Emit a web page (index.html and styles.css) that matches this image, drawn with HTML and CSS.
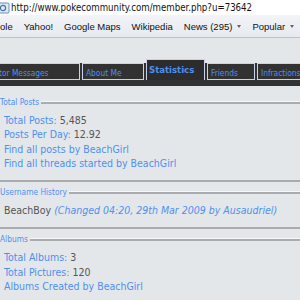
FILE: index.html
```html
<!DOCTYPE html>
<html lang="en">
<head>
  <meta charset="UTF-8" />
  <title>BeachGirl - Statistics</title>
  <link rel="stylesheet" href="styles.css">
</head>
<body>
  <div class="chrome">
    <div class="address">
      <svg class="favicon" width="10" height="12" viewBox="0 0 10 12">
        <rect x="-3" y="1" width="12" height="10" rx="1" fill="#dfe9f5" stroke="#6f8fb5"/>
        <circle cx="3" cy="6" r="2.6" fill="none" stroke="#4a74a8" stroke-width="1.2"/>
      </svg>
      <span class="url">http://www.pokecommunity.com/member.php?u=73642</span>
    </div>
    <div class="bookmarks">
      <span class="mark">ole</span>
      <span class="mark">Yahoo!</span>
      <span class="mark">Google Maps</span>
      <span class="mark">Wikipedia</span>
      <span class="mark menu">News (295)</span>
      <span class="mark menu">Popular</span>
    </div>
  </div>

  <div class="page">
    <div class="tabbar">
      <div class="tab tab-visitor">Visitor Messages</div>
      <div class="tab tab-about">About Me</div>
      <div class="tab tab-stats active">Statistics</div>
      <div class="tab tab-friends">Friends</div>
      <div class="tab">Infractions</div>
    </div>

    <div class="block">
      <div class="legend">Total Posts</div>
      <ul class="rows">
        <li><span class="label">Total Posts:</span> 5,485</li>
        <li><span class="label">Posts Per Day:</span> 12.92</li>
        <li><a href="#">Find all posts by BeachGirl</a></li>
        <li><a href="#">Find all threads started by BeachGirl</a></li>
      </ul>
    </div>

    <div class="block">
      <div class="legend">Username History</div>
      <ul class="rows">
        <li>BeachBoy <em class="change">(Changed 04:20, 29th Mar 2009 by Ausaudriel)</em></li>
      </ul>
    </div>

    <div class="block last">
      <div class="legend">Albums</div>
      <ul class="rows">
        <li><span class="label">Total Albums:</span> 3</li>
        <li><span class="label">Total Pictures:</span> 120</li>
        <li><a href="#">Albums Created by BeachGirl</a></li>
      </ul>
    </div>
  </div>
</body>
</html>
```

FILE: styles.css
```css
:root {
  --bg: #e4e7ea;
  --blue: #4f8ff0;
  --text: #555;
  --dark: #323232;
  --tab-border: #cdd0ea;
  --rule: #a9abae;
}

html, body {
  margin: 0;
  height: 300px;
  overflow: hidden;
  background-color: var(--bg);
  font-family: "DejaVu Sans Condensed", "DejaVu Sans", sans-serif;
}

.chrome {
  background-color: #fff;
}

.address {
  height: 15px;
  display: flex;
  align-items: center;
  gap: 1px;
  background-color: #fff;
}

.favicon {
  display: block;
}

.url {
  font-size: 9.6px;
  color: #111;
}

.bookmarks {
  height: 21px;
  display: flex;
  align-items: center;
  gap: 11px;
  padding-top: 1px;
  background: linear-gradient(#f2f4f7, #e6e9ee);
  border-bottom: 1px solid #b9bec7;
  font-family: "Liberation Sans", Arial, sans-serif;
  font-size: 9.5px;
  color: #111;
  overflow: hidden;
  white-space: nowrap;
}

.mark.menu {
  display: flex;
  align-items: center;
  gap: 5px;
}

.mark.menu::after {
  content: "";
  border-left: 2.5px solid transparent;
  border-right: 2.5px solid transparent;
  border-top: 3px solid #666;
}

.page {
  padding-top: 25px;
}

.tabbar {
  display: flex;
  align-items: flex-start;
  gap: 2px;
  height: 23px;
  margin-bottom: 11px;
  background-color: var(--dark);
  white-space: nowrap;
}

.tab {
  box-sizing: border-box;
  height: 17px;
  line-height: 16px;
  padding: 1px 3px 0;
  border: 1px solid var(--tab-border);
  background-color: var(--dark);
  color: var(--blue);
  font-size: 8.3px;
  flex-shrink: 0;
}

.tab-visitor {
  margin-left: -18px;
  width: 98px;
}

.tab-about {
  width: 62px;
}

.tab-stats {
  width: 59px;
}

.tab-friends {
  width: 48px;
}

.tab.active {
  margin-top: -4px;
  height: 21px;
  line-height: 19px;
  border-bottom: none;
  font-size: 9.5px;
  font-weight: bold;
  padding: 0 2px;
  background-color: #2c2c2c;
}

.block {
  border-bottom: 2px solid var(--rule);
  padding-bottom: 10px;
  margin-bottom: 5px;
}

.legend {
  display: flex;
  align-items: center;
  gap: 2px;
  font-size: 8.3px;
  color: var(--blue);
  height: 10px;
}

.legend::after {
  content: "";
  flex: 1;
  height: 2px;
  border-top: 1px solid #f7f7f7;
  background-color: var(--rule);
}

.rows {
  list-style: none;
  margin: 0;
  padding: 6px 4px 0;
  font-size: 10.5px;
  line-height: 14.3px;
  color: var(--text);
}

.label, .rows a, .change {
  color: var(--blue);
  text-decoration: none;
}

.block.last {
  border-bottom: none;
}
```
